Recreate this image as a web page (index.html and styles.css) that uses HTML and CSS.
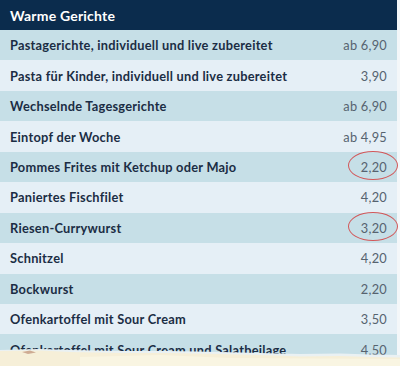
FILE: index.html
```html
<!DOCTYPE html>
<html lang="de">
<head>
<meta charset="utf-8">
<link rel="stylesheet" href="styles.css">
</head>
<body>
<div class="menu">
  <div class="head">Warme Gerichte</div>
  <div class="row odd"><span class="name">Pastagerichte, individuell und live zubereitet</span><span class="price">ab 6,90</span></div>
  <div class="row even"><span class="name">Pasta für Kinder, individuell und live zubereitet</span><span class="price">3,90</span></div>
  <div class="row odd"><span class="name">Wechselnde Tagesgerichte</span><span class="price">ab 6,90</span></div>
  <div class="row even"><span class="name">Eintopf der Woche</span><span class="price">ab 4,95</span></div>
  <div class="row odd"><span class="name">Pommes Frites mit Ketchup oder Majo</span><span class="price circled">2,20</span></div>
  <div class="row even"><span class="name">Paniertes Fischfilet</span><span class="price">4,20</span></div>
  <div class="row odd"><span class="name">Riesen-Currywurst</span><span class="price circled">3,20</span></div>
  <div class="row even"><span class="name">Schnitzel</span><span class="price">4,20</span></div>
  <div class="row odd"><span class="name">Bockwurst</span><span class="price">2,20</span></div>
  <div class="row even"><span class="name">Ofenkartoffel mit Sour Cream</span><span class="price">3,50</span></div>
  <div class="row odd"><span class="name">Ofenkartoffel mit Sour Cream und Salatbeilage</span><span class="price">4,50</span></div>
  <svg class="sand" width="400" height="20" viewBox="0 0 400 20">
    <path d="M0 1 L40 0 L70 1 L120 2 L170 2 L220 3 L260 4 L300 5 L340 4.5 L370 5.5 L400 6 L400 20 L0 20 Z" fill="#eaf1f3"/>
    <path d="M0 2 L40 1.5 L70 3 L120 4 L170 4 L220 5 L260 6 L300 7.5 L340 7 L370 8 L400 8.5 L400 20 L0 20 Z" fill="#f6efd8"/>
    <path d="M22 3 L30 1.5 L36 3.5 L28 5 Z" fill="#c49a82" opacity="0.8"/>
    <path d="M80 8 L160 6 L230 9 L400 10 L400 20 L80 20 Z" fill="#f9f5e2"/>
  </svg>
</div>
</body>
</html>
```
FILE: styles.css
```css
html, body {
  margin: 0;
  padding: 0;
  background: #f4f7f9;
}
body {
  width: 400px;
  height: 366px;
  overflow: hidden;
  font-family: "Lato", "Open Sans", sans-serif;
}
.menu {
  position: relative;
  width: 397px;
  display: flex;
  flex-direction: column;
}
.head {
  height: 30px;
  background: #0b2c4d;
  color: #ffffff;
  font-weight: 700;
  font-size: 14px;
  letter-spacing: 0.2px;
  display: flex;
  align-items: center;
  padding-left: 10px;
}
.row {
  height: 30.45px;
  display: flex;
  align-items: center;
  justify-content: space-between;
  padding: 0 10px 0 10px;
  font-size: 12.8px;
  letter-spacing: 0.25px;
}
.odd { background: #c6dfe7; }
.even { background: #e5eff6; }
.name {
  font-weight: 700;
  color: #1b2d44;
}
.price {
  color: #56636f;
  font-weight: 400;
  position: relative;
}
.circled::after {
  content: "";
  position: absolute;
  left: -13px;
  top: -8px;
  width: 48px;
  height: 27px;
  border: 1px solid #d2585a;
  border-radius: 50%;
}
.sand {
  position: absolute;
  left: 0;
  top: 349px;
}
```
